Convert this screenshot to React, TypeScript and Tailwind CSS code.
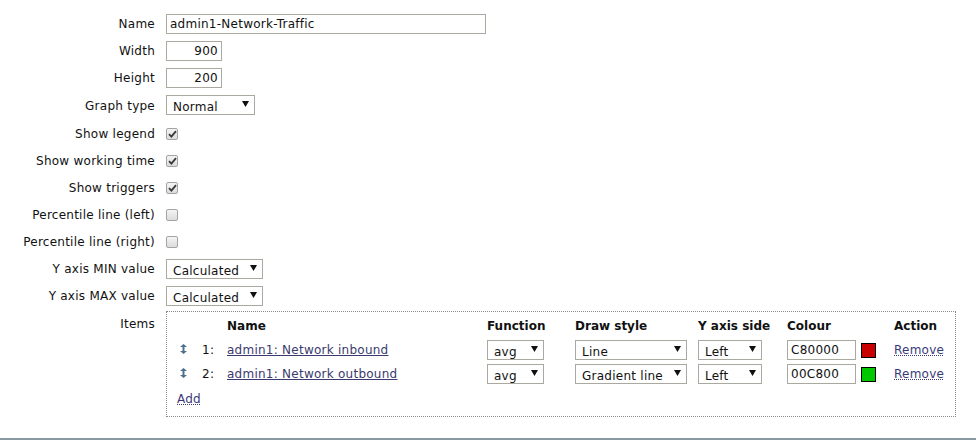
import type { ReactNode } from 'react';

const items = [
  { n: 1, name: 'admin1: Network inbound', fn: 'avg', style: 'Line', side: 'Left', colour: 'C80000', swatch: 'bg-[#c80000]' },
  { n: 2, name: 'admin1: Network outbound', fn: 'avg', style: 'Gradient line', side: 'Left', colour: '00C800', swatch: 'bg-[#00c800]' },
];

function Arrow() {
  return (
    <svg width="7" height="6" viewBox="0 0 7 6" className="shrink-0">
      <polygon points="0,0 7,0 3.5,6" fill="#111" />
    </svg>
  );
}

function Select({ value, width }: { value: string; width: string }) {
  return (
    <div className={`flex h-[20px] ${width} items-start justify-between overflow-hidden border border-[#a9a9a0] bg-white pl-[6px] pr-[5px]`}>
      <span className="pt-[4px] leading-[15px]">{value}</span>
      <span className="pt-[5px]"><Arrow /></span>
    </div>
  );
}

function Check({ on }: { on?: boolean }) {
  return (
    <div className="flex h-[12px] w-[12px] items-center justify-center rounded-[2px] border border-[#a4a4a4] bg-gradient-to-b from-[#f4f4f4] to-[#dcdcdc]">
      {on && (
        <svg width="9" height="8" viewBox="0 0 9 8">
          <path d="M1 4.2 L3.4 6.6 L8 1.2" stroke="#3a3a3a" strokeWidth="1.8" fill="none" />
        </svg>
      )}
    </div>
  );
}

function Row({ label, h = 'h-[27px]', top, children }: { label: string; h?: string; top?: boolean; children: ReactNode }) {
  return (
    <div className={`flex ${top ? 'items-start' : `${h} items-center`}`}>
      <div className={`w-[155px] shrink-0 text-right ${top ? 'pt-[4px]' : 'pt-[1px]'}`}>{label}</div>
      <div className="ml-[11px]">{children}</div>
    </div>
  );
}

function DragIcon() {
  return (
    <svg width="7" height="10" viewBox="0 0 7 10">
      <polygon points="3.5,0 7,3 0,3" fill="#4f6f8f" />
      <rect x="2.5" y="3" width="2" height="4" fill="#4f6f8f" />
      <polygon points="0,7 7,7 3.5,10" fill="#4f6f8f" />
    </svg>
  );
}

export default function App() {
  return (
    <div className="flex h-[440px] w-[976px] flex-col bg-white font-['DejaVu_Sans',sans-serif] text-[12px] tracking-[0.25px] text-[#111]">
      <div className="pt-[10px]">
        <Row label="Name">
          <div className="flex h-[20px] w-[320px] items-center border border-[#a9a9a0] pl-[3px] pt-[1px]">admin1-Network-Traffic</div>
        </Row>
        <Row label="Width">
          <div className="flex h-[20px] w-[56px] items-center justify-end border border-[#a9a9a0] pr-[3px] pt-[1px]">900</div>
        </Row>
        <Row label="Height">
          <div className="flex h-[20px] w-[56px] items-center justify-end border border-[#a9a9a0] pr-[3px] pt-[1px]">200</div>
        </Row>
        <Row label="Graph type" h="h-[29px]">
          <div className="-mt-[2px]"><Select value="Normal" width="w-[89px]" /></div>
        </Row>
        <Row label="Show legend"><Check on /></Row>
        <Row label="Show working time"><Check on /></Row>
        <Row label="Show triggers"><Check on /></Row>
        <Row label="Percentile line (left)"><Check /></Row>
        <Row label="Percentile line (right)"><Check /></Row>
        <Row label="Y axis MIN value"><Select value="Calculated" width="w-[97px]" /></Row>
        <Row label="Y axis MAX value"><Select value="Calculated" width="w-[97px]" /></Row>
        <div className="mt-[2px]">
          <Row label="Items" top>
            <div className="w-[790px] border border-dotted border-[#8a8a8a] pb-[6px] pl-[10px]">
              <div className="flex h-[26px] items-center pt-[1px] font-bold tracking-normal">
                <div className="w-[50px]" />
                <div className="w-[260px]">Name</div>
                <div className="w-[88px]">Function</div>
                <div className="w-[123px]">Draw style</div>
                <div className="w-[89px]">Y axis side</div>
                <div className="w-[107px]">Colour</div>
                <div>Action</div>
              </div>
              {items.map((it) => (
                <div key={it.n} className="flex h-[24px] items-center">
                  <div className="w-[21px] pl-[3px] pb-[3px]"><DragIcon /></div>
                  <div className="w-[29px] pl-[4px]">{it.n}:</div>
                  <div className="w-[260px]"><a className="cursor-pointer text-[#3a3a6e] underline">{it.name}</a></div>
                  <div className="w-[88px]"><Select value={it.fn} width="w-[57px]" /></div>
                  <div className="w-[123px]"><Select value={it.style} width="w-[112px]" /></div>
                  <div className="w-[89px]"><Select value={it.side} width="w-[64px]" /></div>
                  <div className="flex w-[107px] items-center">
                    <div className="flex h-[20px] w-[69px] items-center border border-[#a9a9a0] pl-[3px]">{it.colour}</div>
                    <div className={`ml-[5px] h-[15px] w-[15px] border border-black ${it.swatch}`} />
                  </div>
                  <div><a className="cursor-pointer text-[#3a3a7a] underline decoration-dotted">Remove</a></div>
                </div>
              ))}
              <div className="flex h-[24px] items-center pt-[1px]">
                <a className="cursor-pointer text-[#3a3a7a] underline decoration-dotted">Add</a>
              </div>
            </div>
          </Row>
        </div>
      </div>
      <div className="flex-1" />
      <div className="h-[2px] bg-[#8a9aa2]" />
    </div>
  );
}
